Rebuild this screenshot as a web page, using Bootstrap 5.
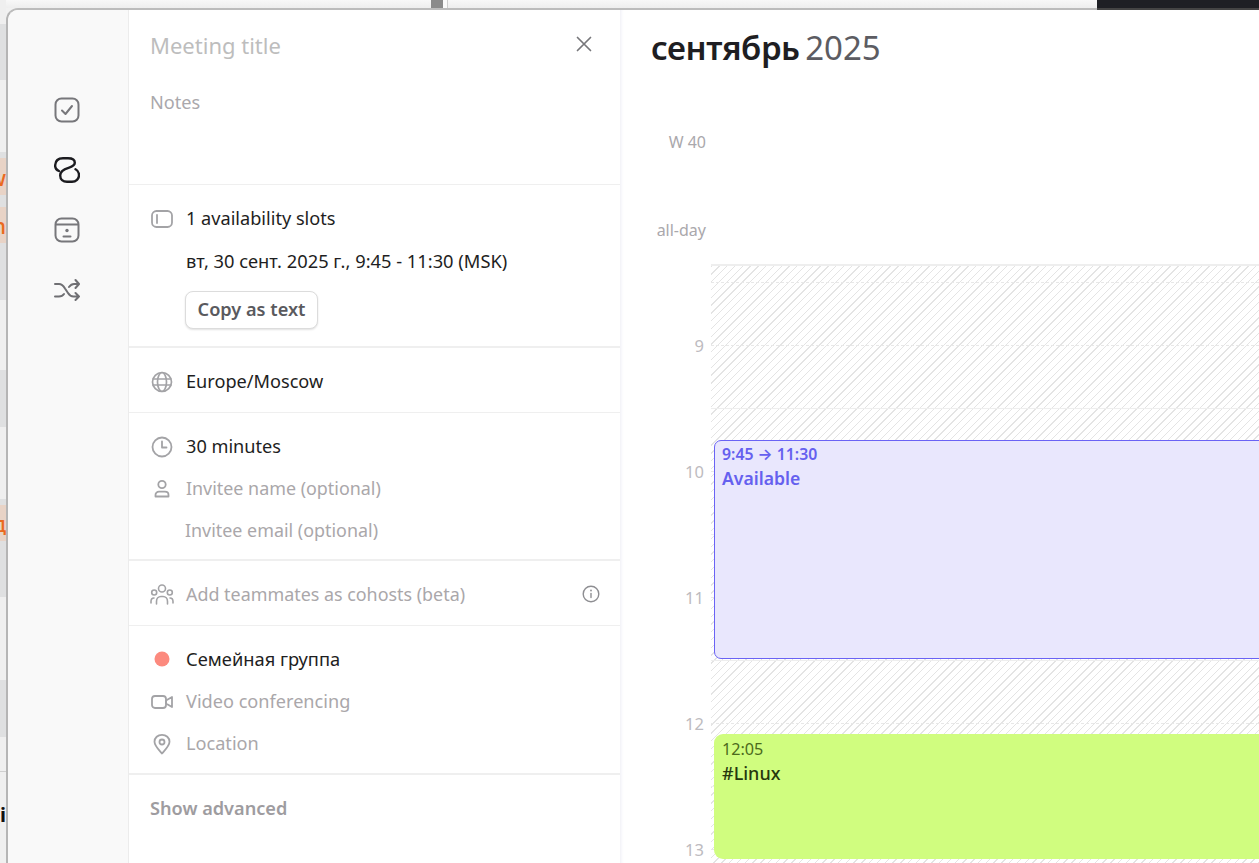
<!DOCTYPE html>
<html lang="ru">
<head>
<meta charset="utf-8">
<title>Calendar</title>
<link href="https://cdn.jsdelivr.net/npm/bootstrap@5.3.0/dist/css/bootstrap.min.css" rel="stylesheet">
<style>
html,body{height:100%;overflow:hidden}
body{background:#f1f1f1;font-family:"Noto Sans","Liberation Sans",sans-serif;font-size:18.15px;color:#1e1e22;line-height:1.3}
.shell{height:863px;width:1259px;overflow:hidden}
/* background desktop slivers */
.top-sliver{height:8px;background:linear-gradient(#f8f8f8,#eeeeee)}
.top-gap{width:431px}
.top-scroll{width:12px;background:#8b8b8b}
.top-light{width:5px;background:#fafafa;border-right:1px solid #cfcfcf}
.top-fill{flex:1}
.top-dark{width:162px;background:#1e1f24}
.edge-dark{position:absolute;right:0;top:-2px;height:2px;width:162px;background:#444}
.left-sliver{width:6px;overflow:hidden;background:#f0f0f0;margin-top:-8px;flex:none}
.seg{display:flex;justify-content:flex-end;overflow:hidden;white-space:nowrap;font-weight:500;line-height:1}
.sg-l{background:#efefef}.sg-g{background:#dfe0e1}.sg-o{background:#e8d3c6;color:#ea6a1e;align-items:center;font-size:22px}
.sx6{height:6px}.sx12{height:12px}.sx36{height:36px}.sx37{height:37px}.sx56{height:56px}.sx57{height:57px}.sx70{height:70px}.sx72{height:72px}.sx24{height:24px}.sx83{height:83px}.sx34{height:34px}
.sg-line{height:1px;background:#cfcfcf}
.seg.sg-t{height:88px;justify-content:flex-start;align-items:flex-start;color:#111;font-size:20px;background:#efefef;font-weight:700;padding-top:33px}
/* window */
.app-window{position:relative;background:#fff;border-top:2px solid #bcbcbc;border-left:2px solid #b5b5b5;border-top-left-radius:12px;height:855px;min-width:0}
.win-clip{overflow:hidden;border-top-left-radius:10px;height:100%;width:100%}
.rail{width:121px;background:#f9f9f9;border-right:1px solid #ececec;padding:87px 2px 0 0;gap:34px;flex:none}
.rail svg{display:block;width:26px;height:26px}
.panel{width:491px;flex:none;background:#fff}
.sect{border-bottom:1px solid #efefef;padding:13px 22px 9px}
.sect.thick{border-bottom-width:2px;padding-bottom:7px}
.sect.sect-six{padding-bottom:8px}
.sect-head{height:175px;padding:19px 22px 0 21px;position:relative}
.title-in{font-size:22px;color:#bdbdbd;line-height:32px}
.notes-in{color:#aaa8ac;margin-top:29px;line-height:24px}
.close-btn{position:absolute;top:25px;right:27px;width:18px;height:18px;padding:0;border:0;background:none;display:flex}
.row-line{height:42px;display:flex;align-items:center}
.row-up{margin:-1px 0 1px}
.ic{width:22px;height:22px;margin-right:13px;flex:none}
.ic-wide{width:24px;height:24px;margin:0 12px 0 -1px;flex:none}
.info-ic{margin-right:-2px;margin-bottom:2px}
.ic-gap{width:35px;flex:none}
.ic-gap-s{width:34px;flex:none}
.cyr{font-size:18.3px}
.muted-t{color:#aaa7aa;font-size:17.9px}
.muted-v{color:#aaa7aa}
.sect.sect-slots{height:163px;padding:13px 22px 0}
.copy-btn{margin:9px 0 0 34px;height:38px;width:133px;padding:0;font-size:18.15px;font-weight:600;color:#5a5a5e;background:#fff;border:1px solid #dcdcdc;border-radius:8px;box-shadow:0 1px 2px rgba(0,0,0,.12)}
.adv{padding:21px 21px;font-weight:600;color:#9e9ca0;line-height:24px}
/* calendar */
.cal{flex:1;min-width:0;position:relative;border-left:1px solid #f4f4f8;box-shadow:inset 3px 0 3px -2px #f5f5fa}
.cal-title{padding:16px 30px 0;height:70px;font-size:33px;line-height:44px;white-space:nowrap;word-spacing:-3px}
.cal-title b{font-weight:600;letter-spacing:-.45px}
.cal-title span{color:#5c5c62;font-weight:400}
.cal-body{height:785px}
.gutter{width:90px;flex:none;text-align:right;padding-right:5px;color:#b3b1b5;font-size:16px;line-height:22px}
.g-week{padding-top:51px;height:91px;color:#aaa8ac}
.g-day{height:96px;color:#aaa8ac;padding-top:48px}
.g-hour{height:126px;font-size:16.5px;color:#bdbbc0;padding-right:2px}
.g-first{height:68px}
.grid-area{flex:1;min-width:0;position:relative}
.grid-head{height:186px;border-bottom:2px solid #eee}
.hatch{background:repeating-linear-gradient(135deg,#e4e4e4 0,#e4e4e4 1px,#fff 1px,#fff 5.500px);height:600px;position:relative}
.slot{height:63px;border-bottom:1px solid #eee}
.slot-first{height:17px;border-bottom:1px dashed #e8e8e8}
.slot-half{border-bottom:1px dashed #e8e8e8}
.ev{position:absolute;left:3px;width:700px;padding:3px 7px;line-height:24px;font-size:18px}
.ev-a{top:174px;height:219px;background:#e9e7fd;border:1px solid #6a63f5;border-radius:7px;color:#6560ef;font-weight:600;font-size:17.6px;padding-top:2px}
.ev-b{top:468px;height:125px;background:#d0fd7f;border-radius:9px;color:#26380e;padding:3px 8px;font-weight:500}
.ev .tm{font-size:16.200px}
.ev-a .tm{font-size:15.800px;line-height:23px}
.ev-b .tm{color:#4c6a1c;font-weight:400}
.arw{font-family:"Inter",sans-serif}
</style>
</head>
<body>
<div class="shell d-flex flex-column">
  <div class="top-sliver d-flex flex-shrink-0">
    <div class="top-gap"></div><div class="top-scroll"></div><div class="top-light"></div><div class="top-fill"></div><div class="top-dark"></div>
  </div>
  <div class="d-flex flex-grow-1">
    <div class="left-sliver">
      <div class="seg sg-l sx24"></div><div class="seg sg-g sx56"></div><div class="seg sg-l sx72"></div><div class="seg sg-g sx6"></div>
      <div class="seg sg-o sx37">w</div><div class="seg sg-g sx12"></div><div class="seg sg-o sx36">n</div><div class="seg sg-g sx57"></div>
      <div class="seg sg-l sx70"></div><div class="seg sg-g sx57"></div><div class="seg sg-l sx72"></div><div class="seg sg-g sx6"></div>
      <div class="seg sg-o sx36">д</div><div class="seg sg-g sx56"></div><div class="seg sg-l sx83"></div><div class="seg sg-g sx57"></div>
      <div class="seg sg-l sx34"></div><div class="sg-line"></div><div class="seg sg-t">is</div>
    </div>
    <div class="app-window flex-grow-1">
      <div class="edge-dark"></div>
      <div class="win-clip d-flex">
      <nav class="rail d-flex flex-column align-items-center">
        <svg viewBox="0 0 26 26" fill="none" stroke="#77777b" stroke-width="2" stroke-linecap="round" stroke-linejoin="round"><rect x="1.500" y="1.500" width="23" height="23" rx="6"/><path d="M8 13.500l3.500 3.500 6.500-8"/></svg>
        <svg viewBox="0 0 26 26" fill="none" stroke="#1b1b1f" stroke-width="2.400" stroke-linecap="round" stroke-linejoin="round"><path d="M5 14C2 12.800 1 10.500 1.200 8 1.500 3.800 4.500 1.300 9 1.300H14C18 1.300 20.800 3 20.800 5.800 20.800 8.500 18 9.800 14.500 10.800 10 12 6.200 14 6.200 18.500 6.200 22.300 9 24.800 13 24.800H18C22 24.800 25 22 25 18.200 25 15.500 24 13.500 21.500 12.200"/></svg>
        <svg viewBox="0 0 26 26" fill="none" stroke="#77777b" stroke-width="2" stroke-linecap="round"><rect x="1.500" y="1.500" width="23" height="23" rx="6"/><path d="M2 7.500h22M9.500 19.500h7"/><circle cx="13" cy="13.500" r="1.700" fill="#77777b" stroke="none"/></svg>
        <svg viewBox="0 0 26 26" fill="none" stroke="#6f6f73" stroke-width="2" stroke-linecap="round" stroke-linejoin="round"><path d="M1 7h4c3 0 4.500 2 6 4.500l3 4.500c1.500 2.500 3 3.500 5.500 3.500H25M1 19.500h4c2.500 0 4-1 5-2.500M15 10c1.500-2 3-3 5-3h5M21.500 3l3.500 4-3.500 4M21.500 16l3.500 3.500-3.500 3.500"/></svg>
      </nav>
      <section class="panel">
        <div class="sect sect-head">
          <div class="title-in">Meeting title</div>
          <div class="notes-in">Notes</div>
          <button class="close-btn" type="button" aria-label="Close"><svg viewBox="0 0 18 18" width="18" height="18" fill="none" stroke="#77777b" stroke-width="1.700" stroke-linecap="round"><path d="M2.500 2.500l13 13M15.500 2.500l-13 13"/></svg></button>
        </div>
        <div class="sect thick sect-slots">
          <div class="row-line"><svg class="ic" viewBox="0 0 22 22" fill="none" stroke="#a3a3a6" stroke-width="1.800"><rect x="1" y="3" width="20" height="16" rx="4.500"/><path d="M6 7v8" stroke-linecap="round"/></svg><span>1 availability slots</span></div>
          <div class="row-line"><span class="ic-gap"></span><span class="cyr">вт, 30 сент. 2025 г., 9:45 - 11:30 (MSK)</span></div>
          <button class="copy-btn btn" type="button">Copy as text</button>
        </div>
        <div class="sect">
          <div class="row-line"><svg class="ic" viewBox="0 0 22 22" fill="none" stroke="#a3a3a6" stroke-width="1.700"><circle cx="11" cy="11" r="9.500"/><ellipse cx="11" cy="11" rx="4.500" ry="9.500"/><path d="M1.500 8h19M1.500 14h19"/></svg><span>Europe/Moscow</span></div>
        </div>
        <div class="sect thick">
          <div class="row-line"><svg class="ic" viewBox="0 0 22 22" fill="none" stroke="#a3a3a6" stroke-width="1.800" stroke-linecap="round" stroke-linejoin="round"><circle cx="11" cy="11" r="9.500"/><path d="M11 5.500V11.500h4.500"/></svg><span>30 minutes</span></div>
          <div class="row-line"><svg class="ic" viewBox="0 0 22 22" fill="none" stroke="#a3a3a6" stroke-width="1.800" stroke-linecap="round" stroke-linejoin="round"><circle cx="11" cy="6.500" r="3.700"/><path d="M4.500 18.500v-1.500c0-2 1.500-3.300 3.500-3.300h6c2 0 3.500 1.300 3.500 3.300v1.500z"/></svg><span class="muted-t">Invitee name (optional)</span></div>
          <div class="row-line"><span class="ic-gap-s"></span><span class="muted-t">Invitee email (optional)</span></div>
        </div>
        <div class="sect">
          <div class="row-line"><svg class="ic-wide" viewBox="0 0 24 24" fill="none" stroke="#a3a3a6" stroke-width="1.600" stroke-linecap="round" stroke-linejoin="round"><circle cx="12" cy="5.500" r="3.500"/><circle cx="4.200" cy="9.500" r="2.500"/><circle cx="19.800" cy="9.500" r="2.500"/><path d="M6.500 21v-2.500c0-3 2-5 4.500-5h2c2.500 0 4.500 2 4.500 5V21M1 20v-1.500C1 16.500 2.300 15 4 15M23 20v-1.500c0-2-1.300-3.500-3-3.500"/></svg><span class="muted-t flex-grow-1">Add teammates as cohosts (beta)</span><svg class="info-ic" width="18" height="18" viewBox="0 0 18 18" fill="none" stroke="#8e8e92" stroke-width="1.400" stroke-linecap="round"><circle cx="9" cy="9" r="7.800"/><path d="M9 8.500v4"/><circle cx="9" cy="5.500" r=".9" fill="#8e8e92" stroke="none"/></svg></div>
        </div>
        <div class="sect thick sect-six">
          <div class="row-line row-up"><svg class="ic" viewBox="0 0 22 22"><circle cx="11" cy="11" r="7.500" fill="#fc8a7e"/></svg><span class="cyr">Семейная группа</span></div>
          <div class="row-line"><svg class="ic" viewBox="0 0 22 22" fill="none" stroke="#a3a3a6" stroke-width="1.800" stroke-linejoin="round"><rect x="1" y="5" width="14" height="12" rx="3"/><path d="M15 9.500l6-3.500v10l-6-3.500z"/></svg><span class="muted-v">Video conferencing</span></div>
          <div class="row-line"><svg class="ic" viewBox="0 0 22 22" fill="none" stroke="#a3a3a6" stroke-width="1.800" stroke-linejoin="round"><path d="M11 20.500C7 16 3.500 12.700 3.500 8.800 3.500 4.700 6.800 1.800 11 1.800s7.500 2.900 7.500 7c0 3.900-3.500 7.200-7.500 11.700z"/><circle cx="11" cy="9" r="2.500"/></svg><span class="muted-v">Location</span></div>
        </div>
        <div class="adv">Show advanced</div>
      </section>
      <main class="cal">
        <div class="cal-title"><b>сентябрь</b> <span>2025</span></div>
        <div class="cal-body d-flex">
          <div class="gutter">
            <div class="g-week">W 40</div>
            <div class="g-day">all-day</div>
            <div class="g-first"></div>
            <div class="g-hour">9</div><div class="g-hour">10</div><div class="g-hour">11</div><div class="g-hour">12</div><div class="g-hour">13</div>
          </div>
          <div class="grid-area">
            <div class="grid-head"></div>
            <div class="hatch">
              <div class="slot-first"></div>
              <div class="slot slot-half"></div><div class="slot"></div><div class="slot slot-half"></div><div class="slot"></div><div class="slot slot-half"></div><div class="slot"></div><div class="slot slot-half"></div><div class="slot"></div><div class="slot slot-half"></div>
              <div class="ev ev-a"><div class="tm">9:45 <span class="arw">→</span> 11:30</div><div>Available</div></div>
              <div class="ev ev-b"><div class="tm">12:05</div><div>#Linux</div></div>
            </div>
          </div>
        </div>
      </main>
      </div>
    </div>
  </div>
</div>
<script src="https://cdn.jsdelivr.net/npm/bootstrap@5.3.0/dist/js/bootstrap.bundle.min.js"></script>
</body>
</html>
